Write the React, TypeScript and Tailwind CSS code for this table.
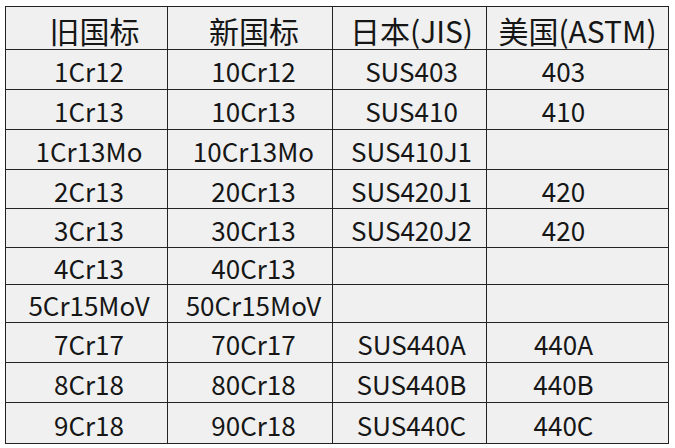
import React from 'react';

const HEAD = ['旧国标', '新国标', '日本(JIS)', '美国(ASTM)'];

const ROWS: string[][] = [
  ['1Cr12', '10Cr12', 'SUS403', '403'],
  ['1Cr13', '10Cr13', 'SUS410', '410'],
  ['1Cr13Mo', '10Cr13Mo', 'SUS410J1', ''],
  ['2Cr13', '20Cr13', 'SUS420J1', '420'],
  ['3Cr13', '30Cr13', 'SUS420J2', '420'],
  ['4Cr13', '40Cr13', '', ''],
  ['5Cr15MoV', '50Cr15MoV', '', ''],
  ['7Cr17', '70Cr17', 'SUS440A', '440A'],
  ['8Cr18', '80Cr18', 'SUS440B', '440B'],
  ['9Cr18', '90Cr18', 'SUS440C', '440C'],
];

const ROW_H = ['h-[40px]', 'h-[40px]', 'h-[40px]', 'h-[39px]', 'h-[39px]', 'h-[37px]', 'h-[38px]', 'h-[40px]', 'h-[40px]', 'h-[41px]'];

// text in the source sits a little off centre per column
const HEAD_PAD = ['pl-[16px]', 'pl-[8px]', 'pl-[4px]', 'pl-0'];
const CELL_PAD = ['pl-[5px]', 'pl-[7px]', 'pl-[4px]', 'pr-[28px]'];

const App: React.FC = () => {
  return (
    <div className="w-[675px] h-[448px] bg-white pl-[5px] pt-[6px] font-['Noto_Sans_CJK_SC','Noto_Sans',sans-serif] text-[#161616]">
      <table className="table-fixed border-collapse w-[664px] bg-[#f0f0f0]">
        <colgroup>
          <col className="w-[162px]" />
          <col className="w-[165px]" />
          <col className="w-[154px]" />
          <col className="w-[182px]" />
        </colgroup>
        <thead>
          <tr className="h-[43px]">
            {HEAD.map((h, j) => (
              <th key={h} className={`border border-[#222] p-0 ${HEAD_PAD[j]} text-[30px] font-normal leading-none text-center whitespace-nowrap pt-[4px]`}>
                {h}
              </th>
            ))}
          </tr>
        </thead>
        <tbody>
          {ROWS.map((r, i) => (
            <tr key={i} className={ROW_H[i]}>
              {r.map((c, j) => (
                <td key={j} className={`border border-[#222] p-0 ${CELL_PAD[j]} pt-[3px] text-[26px] leading-none text-center whitespace-nowrap`}>
                  {c}
                </td>
              ))}
            </tr>
          ))}
        </tbody>
      </table>
    </div>
  );
};

export default App;
